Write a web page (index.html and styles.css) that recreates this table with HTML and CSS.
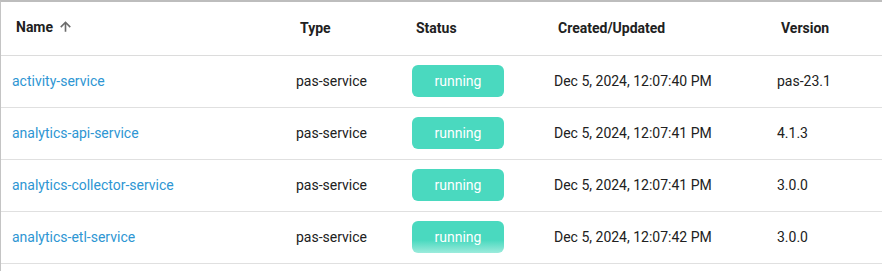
FILE: index.html
```html
<!DOCTYPE html>
<html lang="en">
<head>
    <meta charset="UTF-8">
    <title>Services</title>
    <link rel="stylesheet" href="styles.css">
</head>
<body>
    <div class="card">
        <table class="services">
            <thead>
                <tr>
                    <th class="col-name">Name <span class="sort-icon"><svg width="15" height="15" viewBox="0 0 24 24"><path d="M3.5 12l1.8 1.8L10.7 8.4V20.5h2.6V8.4l5.4 5.4L20.5 12 12 3.5 3.5 12z" fill="#6b6b6b"/></svg></span></th>
                    <th class="col-type">Type</th>
                    <th class="col-status">Status</th>
                    <th class="col-date">Created/Updated</th>
                    <th class="col-version">Version</th>
                </tr>
            </thead>
            <tbody>
                <tr>
                    <td><a href="#">activity-service</a></td>
                    <td>pas-service</td>
                    <td><span class="badge">running</span></td>
                    <td>Dec 5, 2024, 12:07:40 PM</td>
                    <td>pas-23.1</td>
                </tr>
                <tr>
                    <td><a href="#">analytics-api-service</a></td>
                    <td>pas-service</td>
                    <td><span class="badge">running</span></td>
                    <td>Dec 5, 2024, 12:07:41 PM</td>
                    <td>4.1.3</td>
                </tr>
                <tr>
                    <td><a href="#">analytics-collector-service</a></td>
                    <td>pas-service</td>
                    <td><span class="badge">running</span></td>
                    <td>Dec 5, 2024, 12:07:41 PM</td>
                    <td>3.0.0</td>
                </tr>
                <tr>
                    <td><a href="#">analytics-etl-service</a></td>
                    <td>pas-service</td>
                    <td><span class="badge badge-fade">running</span></td>
                    <td>Dec 5, 2024, 12:07:42 PM</td>
                    <td>3.0.0</td>
                </tr>
            </tbody>
        </table>
    </div>
</body>
</html>
```

FILE: styles.css
```css
* {
    margin: 0;
    padding: 0;
    box-sizing: border-box;
}

body {
    font-family: Roboto, "Liberation Sans", sans-serif;
    background-color: #fff;
    color: #212121;
}

.card {
    width: 882px;
    height: 271px;
    border-top: 2px solid #bdbdbd;
    border-left: 1px solid #c4c4c4;
    overflow: hidden;
    background-color: #fff;
}

.services {
    width: 100%;
    border-collapse: collapse;
    table-layout: fixed;
}

.services th {
    height: 53px;
    text-align: left;
    font-size: 14px;
    font-weight: bold;
    padding: 0 0 0 15px;
    color: #212121;
    border-bottom: 1px solid #dcdcdc;
}

.services td {
    height: 52px;
    font-size: 14px;
    padding: 0 0 0 11px;
    border-bottom: 1px solid #e0e0e0;
}

.col-name { width: 284px; }
.col-type { width: 116px; }
.col-status { width: 142px; }
.col-date { width: 223px; }

.sort-icon {
    display: inline-block;
    vertical-align: -2px;
    margin-left: 1px;
}

.services a {
    color: #2e96d3;
    text-decoration: none;
}

.badge {
    display: inline-block;
    width: 92px;
    height: 32px;
    line-height: 32px;
    text-align: center;
    border-radius: 6px;
    background-color: #4ad9bf;
    color: #fff;
    font-size: 14px;
}

.badge-fade {
    background: linear-gradient(to bottom, #4ad9bf 60%, #9cebdc 100%);
}
```
